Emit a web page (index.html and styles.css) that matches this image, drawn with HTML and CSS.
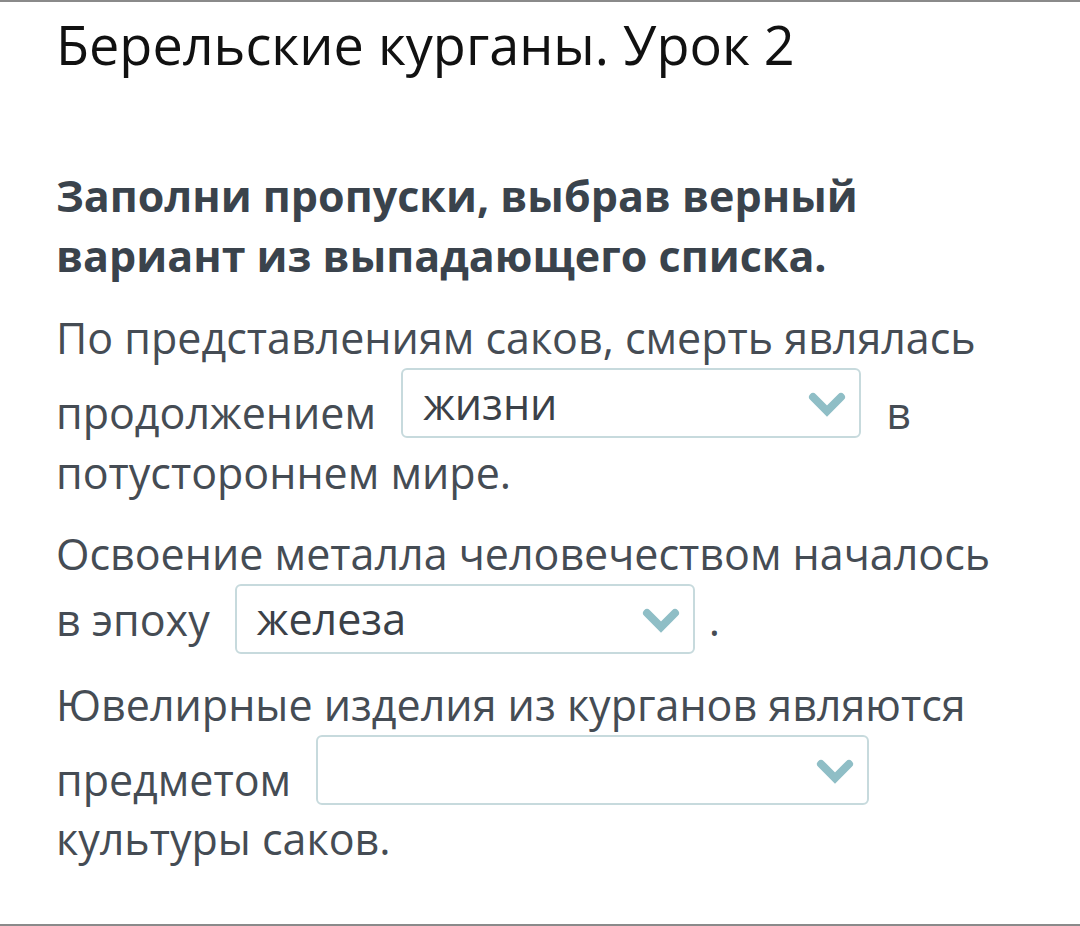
FILE: index.html
```html
<!DOCTYPE html>
<html lang="ru">
<head>
<meta charset="utf-8">
<title>Берельские курганы. Урок 2</title>
<link rel="stylesheet" href="styles.css">
</head>
<body>
<main class="sheet">
  <h1 class="title">Берельские курганы. Урок 2</h1>
  <p class="task">Заполни пропуски, выбрав верный вариант из выпадающего списка.</p>
  <p class="q">По представлениям саков, смерть являлась продолжением <span class="dd dd--raised"><span class="dd-value">жизни</span><svg class="chev" viewBox="0 0 38 26" aria-hidden="true"><path d="M5 5 L19 19 L33 5"/></svg></span> в потустороннем мире.</p>
  <p class="q">Освоение металла человечеством началось в эпоху <span class="dd"><span class="dd-value">железа</span><svg class="chev" viewBox="0 0 38 26" aria-hidden="true"><path d="M5 5 L19 19 L33 5"/></svg></span>.</p>
  <p class="q">Ювелирные изделия из курганов являются предметом <span class="dd dd--wide dd--raised"><span class="dd-value"></span><svg class="chev" viewBox="0 0 38 26" aria-hidden="true"><path d="M5 5 L19 19 L33 5"/></svg></span> культуры саков.</p>
</main>
</body>
</html>
```
FILE: styles.css
```css
html, body {
  margin: 0;
  padding: 0;
  background: #ffffff;
}

.sheet {
  box-sizing: border-box;
  height: 926px;
  border-top: 2px solid #8a8a8a;
  border-bottom: 2px solid #8a8a8a;
  padding: 5px 74px 0 56px;
  font-family: "Open Sans", "Noto Sans", sans-serif;
}

.title {
  margin: 0 0 85px;
  font-size: 54px;
  font-weight: 400;
  line-height: normal;
  color: #111111;
}

.task {
  margin: 0 0 22px;
  font-size: 43px;
  font-weight: 700;
  line-height: 60px;
  color: #3a434c;
}

.q {
  margin: 0 0 21px;
  font-size: 43px;
  line-height: 60px;
  color: #454c54;
}

.dd {
  display: inline-flex;
  align-items: center;
  box-sizing: border-box;
  width: 460px;
  height: 70px;
  margin: 0 14px;
  padding: 0 13px 0 20px;
  border: 2px solid #c7dadd;
  border-radius: 6px;
  background: #ffffff;
  vertical-align: baseline;
}

.dd--raised {
  vertical-align: 9px;
}

.dd--wide {
  width: 553px;
}

.dd-value {
  flex: 1;
  line-height: normal;
  color: #3b4148;
}

.dd-value:empty::before {
  content: "\200b";
}

.chev {
  width: 38px;
  height: 26px;
  flex: none;
  margin-top: 4px;
}

.chev path {
  fill: none;
  stroke: #8fbec6;
  stroke-width: 8;
  stroke-linecap: round;
  stroke-linejoin: miter;
}
```
